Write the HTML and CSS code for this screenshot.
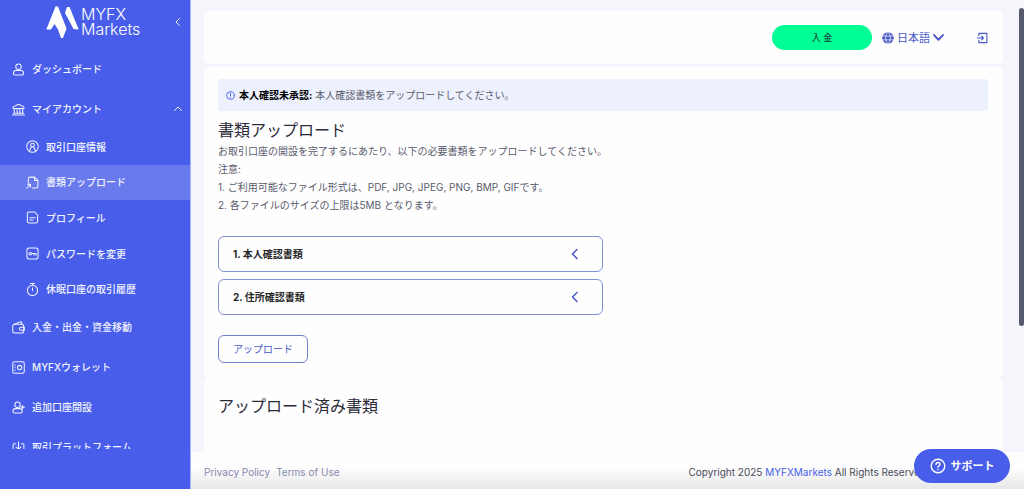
FILE: index.html
```html
<!DOCTYPE html>
<html lang="ja">
<head>
<meta charset="utf-8">
<meta name="viewport" content="width=device-width, initial-scale=1">
<title>書類アップロード | MYFX Markets</title>
<link rel="stylesheet" href="styles.css">
</head>
<body>
<div class="app">
  <aside class="sidebar">
    <div class="brand">
      <a class="logo" href="#">
        <svg class="logo-mark" viewBox="0 0 33 34" aria-hidden="true">
          <path fill="currentColor" d="M9.500 1.500H12L20.500 23.500 17 33H15L12 24.500 8.500 19 5 24.500H.3z"/>
          <path fill="currentColor" d="M21 2h2.500L32.700 24.500 27.500 24 19 8z"/>
        </svg>
        <span class="logo-text">MYFX<br>Markets</span>
      </a>
      <button class="collapse" type="button" aria-label="メニューを閉じる">
        <svg class="chev" viewBox="0 0 8 8"><path d="M5.500.5 2 4l3.500 3.500"/></svg>
      </button>
    </div>
    <nav class="nav">
      <a class="nav-item" href="#">
        <svg class="icon" viewBox="0 0 14 14"><circle cx="7" cy="4" r="2.900"/><path d="M4.500 8h5c2 0 3 1.700 3 3.200 0 1-.6 1.600-1.500 1.600H3c-.9 0-1.500-.6-1.500-1.600C1.500 9.700 2.500 8 4.500 8z"/></svg>
        ダッシュボード
      </a>
      <a class="nav-item" href="#">
        <svg class="icon" viewBox="0 0 14 14"><path d="M1.200 4.200 7 1.300l5.800 2.900v1.600H1.200zM.5 12.800h13M1.500 11h11M2.500 6v5M5.500 6v5M8.500 6v5M11.500 6v5"/></svg>
        マイアカウント
        <svg class="chev nav-chev" viewBox="0 0 8 8"><path d="M.5 5.500 4 2l3.500 3.500"/></svg>
      </a>
      <div class="subnav">
        <a class="nav-item sub" href="#">
          <svg class="icon" viewBox="0 0 14 14"><circle cx="7" cy="7" r="6.200"/><circle cx="7" cy="5.400" r="2"/><path d="M3.800 11.600 5.800 7.200M10.200 11.600 8.200 7.200"/></svg>
          取引口座情報
        </a>
        <a class="nav-item sub active" href="#" aria-current="page">
          <svg class="icon" viewBox="0 0 14 14"><path d="M2.500 7.500V3c0-1.200.6-1.800 1.800-1.800h5l3.500 3.500V11c0 1.200-.6 1.800-1.800 1.800H7M9.200 1.300v3.500h3.500M.8 13l4-4M1.800 9h3v3"/></svg>
          書類アップロード
        </a>
        <a class="nav-item sub" href="#">
          <svg class="icon" viewBox="0 0 14 14"><path d="M3.200 1h6l3.300 3.300v7c0 1.100-.6 1.700-1.700 1.700H3.200c-1.100 0-1.700-.6-1.700-1.700V2.700C1.500 1.600 2.100 1 3.200 1zM4 7.200h6M4 9.800h3.500"/></svg>
          プロフィール
        </a>
        <a class="nav-item sub" href="#">
          <svg class="icon" viewBox="0 0 14 14"><rect x="1" y="1" width="12" height="12" rx="2.500"/><circle cx="4.600" cy="7.200" r="1.400"/><path d="M6 7h4.800v1.800M8.600 7v1.500"/></svg>
          パスワードを変更
        </a>
        <a class="nav-item sub" href="#">
          <svg class="icon" viewBox="0 0 14 14"><circle cx="7" cy="8" r="5.500"/><path d="M4.800.6h4.400M7 .6v1.900M7 5v3.200"/></svg>
          休眠口座の取引履歴
        </a>
      </div>
      <a class="nav-item" href="#">
        <svg class="icon" viewBox="0 0 14 14"><rect x=".8" y="3.600" width="11.800" height="9.400" rx="2.200"/><path d="M2.500 3.500 8.800 1c1-.3 1.700.2 1.700 1.200v1.300M13.300 6.700H9.700a1.600 1.600 0 0 0 0 3.300h3.600z"/></svg>
        入金・出金・資金移動
      </a>
      <a class="nav-item" href="#">
        <svg class="icon" viewBox="0 0 14 14"><rect x=".8" y=".8" width="12.400" height="12.400" rx="2"/><circle cx="8.200" cy="7" r="2.300"/><path d="M3.200 4v.6M3.200 6.700v.6M3.200 9.400v.6"/></svg>
        MYFXウォレット
      </a>
      <a class="nav-item" href="#">
        <svg class="icon" viewBox="0 0 14 14"><circle cx="6" cy="4" r="2.900"/><path d="M4 8.200h4c2 0 3 1.500 3 3 0 1-.6 1.600-1.500 1.600H2.500c-.9 0-1.500-.6-1.500-1.600 0-1.500 1-3 3-3zM11.500 4.800v3.600M9.700 6.600h3.600"/></svg>
        追加口座開設
      </a>
      <a class="nav-item" href="#">
        <svg class="icon" viewBox="0 0 14 14"><path d="M4 3H2.500C1.600 3 1.200 3.500 1.200 4.300V13h11.600V4.300c0-.8-.4-1.300-1.300-1.300H10M7 1v8M4.500 6.600 7 9.100l2.500-2.500"/></svg>
        取引プラットフォーム
      </a>
    </nav>
  </aside>

  <div class="page">
    <main class="content">
      <header class="card topbar">
        <button class="deposit" type="button">入 金</button>
        <label class="lang">
          <svg class="globe" viewBox="0 0 12 12" aria-hidden="true"><circle cx="6" cy="6" r="5.800" fill="currentColor"/><path d="M0 4.100h12M0 7.900h12M6 .3C2.700 3 2.700 9 6 11.700M6 .3C9.300 3 9.300 9 6 11.700" fill="none" stroke="#fff" stroke-width=".7"/></svg>
          <select class="lang-select" aria-label="言語">
            <option>日本語</option>
          </select>
          <svg class="lang-chev" viewBox="0 0 10 8" aria-hidden="true"><path d="M1 1.800 5 6l4-4.200"/></svg>
        </label>
        <button class="logout" type="button" aria-label="ログアウト">
          <svg class="logout-icon" viewBox="0 0 12 12"><path d="M2 3.500V1h8.800v10H2V8.500M0 6h7M5 4l2 2-2 2"/></svg>
        </button>
      </header>

      <section class="card upload">
        <div class="alert" role="status">
          <svg class="info" viewBox="0 0 10 10" aria-hidden="true"><circle cx="5" cy="5" r="4.300"/><path d="M5 2.300v3.200M5 7.200v.3"/></svg>
          <p class="alert-text"><strong>本人確認未承認:</strong> 本人確認書類をアップロードしてください。</p>
        </div>
        <h1 class="title">書類アップロード</h1>
        <p class="line">お取引口座の開設を完了するにあたり、以下の必要書類をアップロードしてください。</p>
        <p class="line">注意:</p>
        <p class="line">1. ご利用可能なファイル形式は、PDF, JPG, JPEG, PNG, BMP, GIFです。</p>
        <p class="line">2. 各ファイルのサイズの上限は5MB となります。</p>
        <div class="accordion">
          <button class="panel" type="button" aria-expanded="false">1. 本人確認書類
            <svg class="panel-chev" viewBox="0 0 8 12"><path d="M6 1.500 1.500 6 6 10.500"/></svg>
          </button>
          <button class="panel" type="button" aria-expanded="false">2. 住所確認書類
            <svg class="panel-chev" viewBox="0 0 8 12"><path d="M6 1.500 1.500 6 6 10.500"/></svg>
          </button>
        </div>
        <button class="submit" type="button">アップロード</button>
      </section>

      <section class="card uploaded">
        <h2 class="title">アップロード済み書類</h2>
      </section>
    </main>

    <footer class="footer">
      <div class="legal"><a href="#">Privacy Policy</a><a href="#">Terms of Use</a></div>
      <p class="copy">Copyright 2025 <a href="#">MYFXMarkets</a> All Rights Reserved</p>
    </footer>
  </div>
</div>
<div class="scroll-thumb" aria-hidden="true"></div>
<button class="support" type="button">
  <svg class="help" viewBox="0 0 16 16" aria-hidden="true"><circle cx="8" cy="8" r="6.800"/><path d="M6 6.400C6 5.200 6.900 4.500 8 4.500s2 .7 2 1.800c0 1.400-2 1.500-2 3M8 11.500v.3"/></svg>
  サポート
</button>
</body>
</html>
```
FILE: styles.css
```css
* { box-sizing: border-box; }

body {
  margin: 0;
  background: #f5f5fc;
  color: #5a5b6b;
  font: 10px/18px Inter, "Noto Sans CJK JP", sans-serif;
}

h1, h2, p { margin: 0; }
a { color: inherit; text-decoration: none; }
button, select { font: inherit; color: inherit; background: none; border: 0; padding: 0; cursor: pointer; }
svg { display: block; flex: none; fill: none; stroke: currentColor; stroke-linecap: round; stroke-linejoin: round; }

.app { display: flex; height: 100vh; overflow: hidden; }

/* Sidebar */
.sidebar {
  display: flex;
  flex-direction: column;
  flex: none;
  width: 191px;
  padding-bottom: 40px;
  background: #485eea;
  border-right: 1px solid #a9b6f6;
  color: #f2f4ff;
}
.brand { display: flex; align-items: flex-start; flex: none; height: 49px; padding: 5px 8px 0 46px; }
.logo { display: flex; gap: 2px; color: #fff; }
.logo-mark { width: 33px; height: 34px; stroke: none; }
.logo-text { padding-top: 2px; font-family: Inter, sans-serif; font-size: 16px; line-height: 15px; font-weight: 300; }
.collapse { margin: 13px 0 0 auto; }
.chev { width: 8px; height: 8px; stroke-width: 1; }
.nav { flex: 1; min-height: 0; overflow: hidden; }
.nav-item { display: flex; align-items: center; gap: 7px; height: 40px; padding: 0 8px 0 12px; font-weight: 500; white-space: nowrap; }
.icon { width: 13px; height: 13px; stroke-width: 1.1; }
.nav-chev { margin-left: auto; }
.subnav { display: grid; grid-auto-rows: 1fr; height: 178px; }
.nav-item.sub { height: auto; padding-left: 26px; }
.nav-item.active { background: #687aec; }

/* Main column */
.page { display: flex; flex-direction: column; flex: 1; min-width: 0; }
.content { display: flex; flex-direction: column; flex: 1; min-height: 0; padding: 11px 21px 0 13px; }
.card { flex: none; background: #fefeff; border-radius: 5px; }
.topbar { display: flex; align-items: center; justify-content: flex-end; height: 53px; margin-bottom: 3px; padding: 0 15px; color: #4757c8; }
.deposit { width: 100px; height: 25px; border-radius: 13px; background: #00ff95; color: #16493f; font-size: 9px; font-weight: 500; }
.lang { display: flex; align-items: center; gap: 3px; margin: 0 33px 0 10px; }
.globe { width: 12px; height: 12px; stroke: none; }
.lang-select { appearance: none; font-size: 11px; line-height: 16px; }
.lang-chev { width: 11px; height: 9px; stroke-width: 1.800; }
.logout-icon { width: 11px; height: 12px; stroke-width: 1.200; }

.upload { padding: 12px 15px 15px 14px; }
.alert { display: flex; align-items: center; gap: 4px; height: 32px; margin-bottom: 7px; padding: 0 8px; border-radius: 3px; background: #edf1fe; }
.alert strong { color: #000; }
.info { width: 9px; height: 9px; color: #485eea; }
.title { color: #2b2b38; font-size: 16px; line-height: 24px; font-weight: 400; }
.accordion { display: grid; gap: 7px; max-width: 385px; margin: 22px 0 20px; }
.panel { display: flex; align-items: center; justify-content: space-between; height: 36px; padding: 0 23px 0 14px; border: 1px solid #8290d2; border-radius: 6px; color: #262626; font-weight: 700; }
.panel-chev { width: 8px; height: 12px; color: #4757c8; stroke-width: 1.500; }
.submit { height: 28px; padding: 0 14px; border: 1px solid #6f7fcd; border-radius: 6px; color: #4757c8; }
.uploaded { flex: 1; padding: 16px 14px; border-radius: 5px 5px 0 0; }

.footer {
  display: flex;
  align-items: center;
  justify-content: space-between;
  flex: none;
  height: 37px;
  padding: 3px 98px 0 13px;
  background: linear-gradient(#fefefe 40%, #e8e8e8);
}
.legal { display: flex; gap: 6px; color: #8788b0; }
.copy { color: #4a4b5b; }
.copy a { color: #485eea; }

/* Floating parts */
.scroll-thumb { position: fixed; top: 8px; right: 0; width: 5px; height: 65vh; border-radius: 3px; background: #565a6e; }
.support {
  position: fixed;
  right: 14px;
  bottom: 6px;
  display: flex;
  align-items: center;
  justify-content: center;
  gap: 5px;
  width: 96px;
  height: 34px;
  border-radius: 17px;
  background: #485eea;
  color: #fff;
  font-size: 11px;
  font-weight: 700;
}
.help { width: 16px; height: 16px; stroke-width: 1.400; }
```
